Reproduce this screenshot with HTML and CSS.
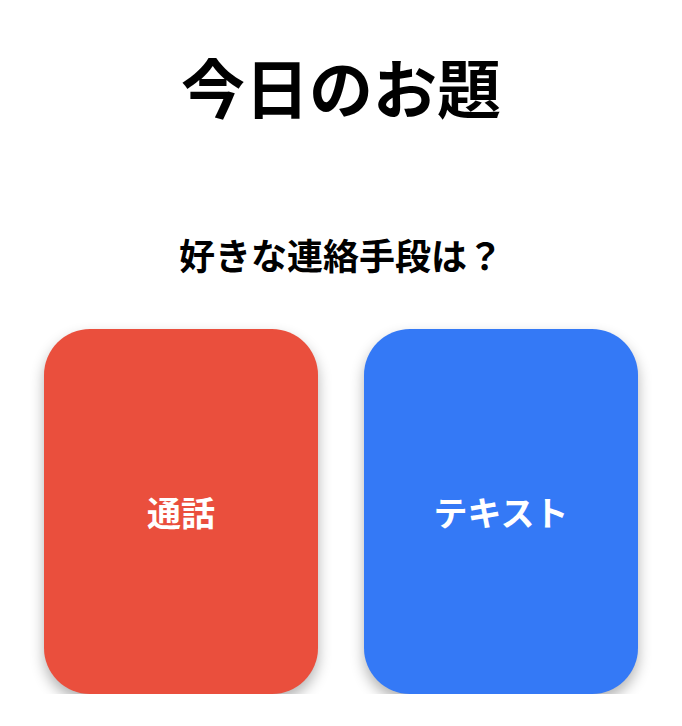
FILE: index.html
```html
<!DOCTYPE html>
<html lang="ja">
<head>
<meta charset="utf-8">
<link rel="stylesheet" href="styles.css">
</head>
<body>
<main class="page">
  <h1 class="title">今日のお題</h1>
  <p class="question">好きな連絡手段は？</p>
  <div class="choices">
    <div class="card card-red">通話</div>
    <div class="card card-blue">テキスト</div>
  </div>
</main>
</body>
</html>
```
FILE: styles.css
```css
html, body {
  margin: 0;
  padding: 0;
  background: #ffffff;
}
body {
  font-family: "Noto Sans CJK JP", "Noto Sans", sans-serif;
  color: #000;
}
.page {
  display: flex;
  flex-direction: column;
  align-items: center;
  padding-top: 53px;
}
.title {
  margin: 0;
  font-size: 64px;
  line-height: 64px;
  font-weight: 700;
}
.question {
  margin: 119px 0 0;
  font-size: 36px;
  line-height: 36px;
  font-weight: 700;
}
.choices {
  margin-top: 57px;
  display: flex;
  gap: 46px;
}
.card {
  width: 274px;
  height: 365px;
  border-radius: 46px;
  display: flex;
  align-items: center;
  justify-content: center;
  color: #fff;
  font-size: 34px;
  font-weight: 700;
  box-shadow: 0 7px 14px rgba(0, 0, 0, 0.3);
}
.card-red {
  background: #ea4f3d;
}
.card-blue {
  background: #3479f6;
}
```
